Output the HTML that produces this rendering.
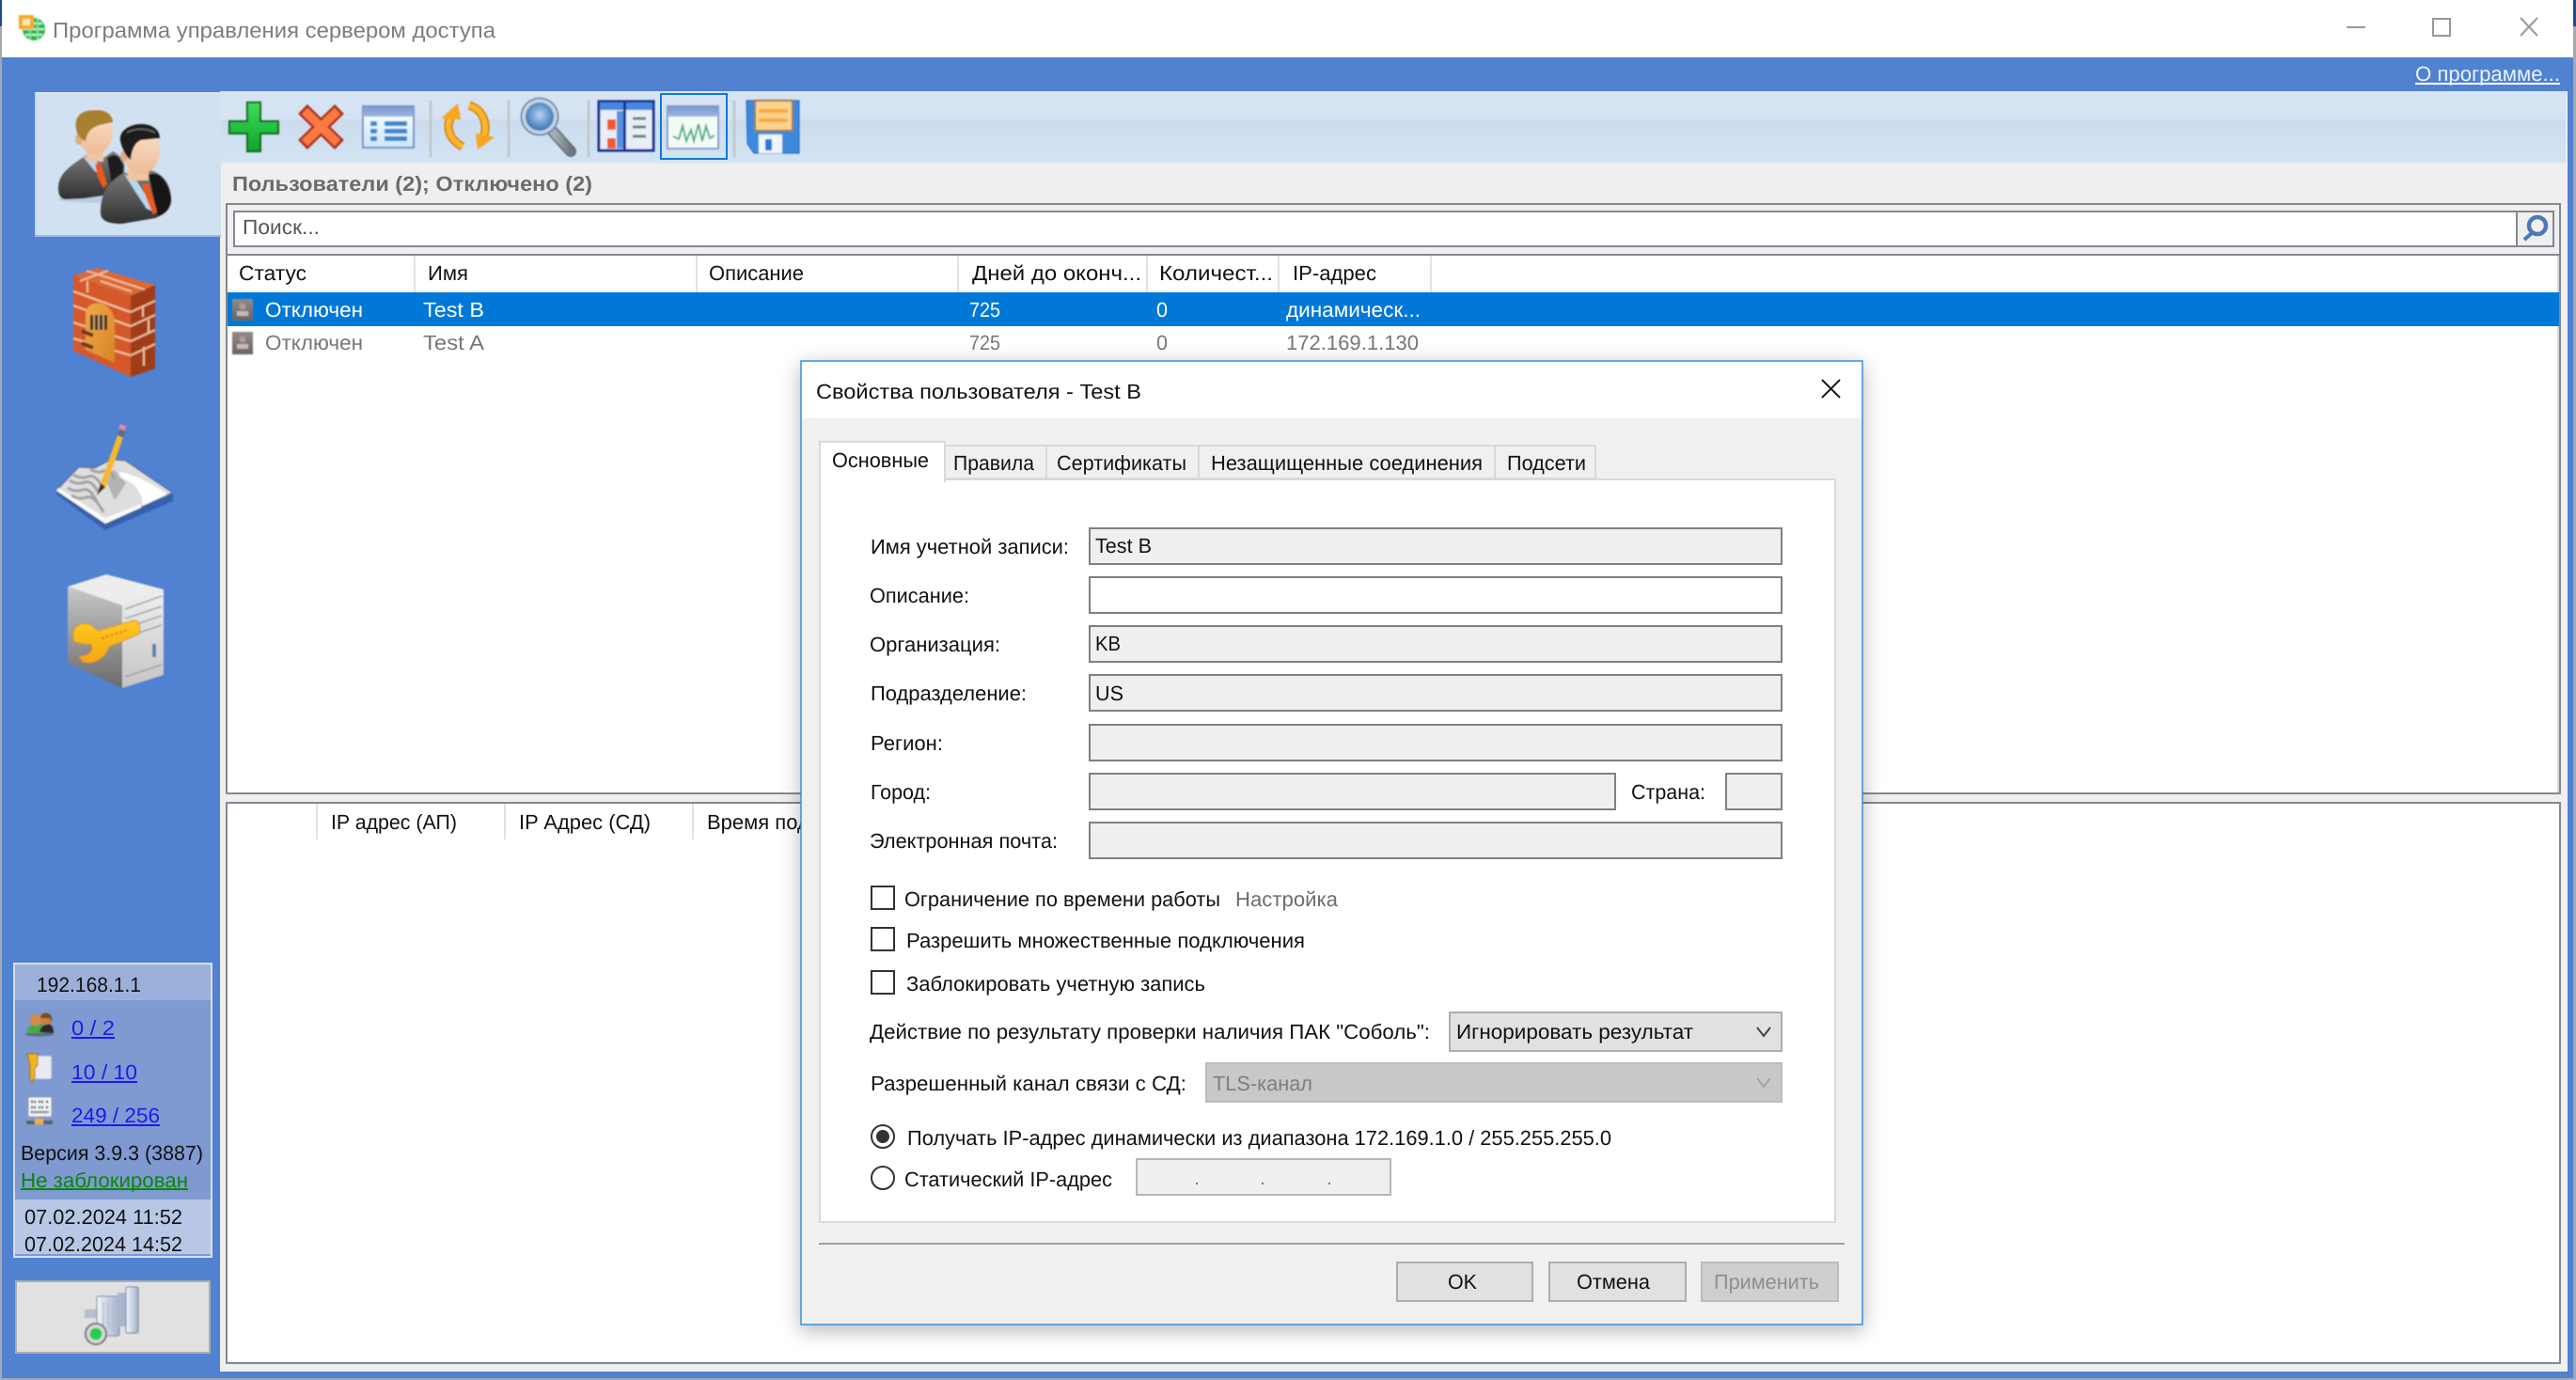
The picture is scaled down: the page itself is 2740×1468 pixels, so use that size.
<!DOCTYPE html>
<html lang="ru"><head><meta charset="utf-8"><title>Программа управления сервером доступа</title>
<style>
html,body{margin:0;padding:0;background:#fff;width:2740px;height:1468px;overflow:hidden}
svg{display:block}
text{font-family:"Liberation Sans","DejaVu Sans",sans-serif;font-size:22px;fill:#111;text-rendering:geometricPrecision;white-space:pre}
.g{fill:#777}
</style></head><body>
<svg xmlns="http://www.w3.org/2000/svg" width="2740" height="1468" viewBox="0 0 2740 1468">
<defs>
<filter id="soft" x="-10%" y="-10%" width="120%" height="120%"><feGaussianBlur stdDeviation="0.7"/></filter>
<filter id="sh" x="-8%" y="-8%" width="116%" height="116%"><feGaussianBlur stdDeviation="11"/></filter>
<linearGradient id="tb1" x1="0" y1="0" x2="0" y2="1"><stop offset="0" stop-color="#d7e3f2"/><stop offset="1" stop-color="#d5e3f3"/></linearGradient>
<linearGradient id="tb2" x1="0" y1="0" x2="0" y2="1"><stop offset="0" stop-color="#ccdcee"/><stop offset="1" stop-color="#d2e3f3"/></linearGradient>
<linearGradient id="suit" x1="0" y1="0" x2="0" y2="1"><stop offset="0" stop-color="#7c7c7c"/><stop offset="1" stop-color="#303030"/></linearGradient>
<linearGradient id="skin" x1="0" y1="0" x2="0" y2="1"><stop offset="0" stop-color="#fbe2cb"/><stop offset="1" stop-color="#eebb96"/></linearGradient>
<linearGradient id="plus" x1="0" y1="0" x2="0" y2="1"><stop offset="0" stop-color="#3fdc5c"/><stop offset="1" stop-color="#0ea32a"/></linearGradient>
<linearGradient id="lst" x1="0" y1="0" x2="0" y2="1"><stop offset="0" stop-color="#fff"/><stop offset="1" stop-color="#c9e6f9"/></linearGradient>
<linearGradient id="hdr" x1="0" y1="0" x2="0" y2="1"><stop offset="0" stop-color="#7c97cc"/><stop offset="1" stop-color="#9ab6e2"/></linearGradient>
<radialGradient id="lens" cx=".5" cy=".45" r=".55"><stop offset="0" stop-color="#b9d2ee"/><stop offset=".6" stop-color="#5f93cc"/><stop offset="1" stop-color="#2f6aa6"/></radialGradient>
<linearGradient id="hand" x1="0" y1="0" x2="1" y2="0"><stop offset="0" stop-color="#a8b0b8"/><stop offset="1" stop-color="#6e7780"/></linearGradient>
<linearGradient id="srvL" x1="0" y1="0" x2="0" y2="1"><stop offset="0" stop-color="#c8c8c8"/><stop offset="1" stop-color="#6a6a6a"/></linearGradient>
<linearGradient id="srvR" x1="0" y1="0" x2="0" y2="1"><stop offset="0" stop-color="#efefef"/><stop offset="1" stop-color="#c4c4c4"/></linearGradient>
<linearGradient id="wr" x1="0" y1="0" x2="0" y2="1"><stop offset="0" stop-color="#ffc91e"/><stop offset="1" stop-color="#f6a612"/></linearGradient>
<linearGradient id="pl" x1="0" y1="0" x2="1" y2="0"><stop offset="0" stop-color="#f2f5fb"/><stop offset="1" stop-color="#a3b0cc"/></linearGradient>
<linearGradient id="door" x1="0" y1="0" x2="1" y2="1"><stop offset="0" stop-color="#eeaa48"/><stop offset="1" stop-color="#d98426"/></linearGradient>
<linearGradient id="st" x1="0" y1="0" x2="0" y2="1"><stop offset="0" stop-color="#94888a"/><stop offset="1" stop-color="#6d6361"/></linearGradient>
</defs>

<!-- window -->
<rect width="2740" height="1468" fill="#5181d1"/>
<rect width="2740" height="61" fill="#fff"/>
<rect x="0" y="0" width="2" height="1468" fill="#a4a8b0"/>
<rect x="0" y="0" width="2" height="28" fill="#1d4a8c"/>
<rect x="2737" y="0" width="3" height="1468" fill="#a4a8b0"/>
<rect x="2737" y="0" width="3" height="28" fill="#1d4a8c"/>
<rect x="0" y="1466" width="2740" height="2" fill="#a4a8b0"/>
<!-- title -->
<g filter="url(#soft)">
<circle cx="36" cy="31" r="12" fill="#26b54a"/>
<path d="M25 31h22M27 25h18M27 37h18" stroke="#c9f3d2" stroke-width="2"/>
<path d="M32 20v22M40 20v22" stroke="#7fe39a" stroke-width="2"/>
<rect x="20" y="16" width="16" height="15" rx="1" fill="#f6aa24"/>
<rect x="24" y="20" width="8" height="7" fill="#fce7b6"/>
</g>
<text x="56" y="40" textLength="471" lengthAdjust="spacingAndGlyphs" style="font-size:23px;fill:#7d7d7d">Программа управления сервером доступа</text>
<!-- window buttons -->
<rect x="2496" y="28" width="20" height="2" fill="#999"/>
<rect x="2588" y="20" width="18" height="18" fill="none" stroke="#999" stroke-width="2"/>
<path d="M2681 19L2699 38M2699 19L2681 38" stroke="#999" stroke-width="2"/>
<!-- about -->
<text x="2569" y="86" textLength="154" lengthAdjust="spacingAndGlyphs" style="fill:#e9f3ff">О программе...</text>
<rect x="2569" y="88" width="154" height="2" fill="#fff"/>

<!-- main panel -->
<rect x="234" y="97" width="2497" height="1362" fill="#efefef"/>
<rect x="235" y="97" width="2494" height="30" fill="url(#tb1)"/>
<rect x="235" y="127" width="2494" height="45" fill="url(#tb2)"/>
<rect x="235" y="172" width="2494" height="2" fill="#dfe7f0"/>
<rect x="2729" y="97" width="2" height="62" fill="#e9eef5"/>

<!-- side selected tab -->
<rect x="37" y="98" width="198" height="152" fill="#d1e1f2"/>
<rect x="37" y="98" width="198" height="2" fill="#dde7f4"/>
<rect x="37" y="250" width="198" height="2" fill="#9fb5db"/>
<rect x="37" y="98" width="2" height="152" fill="#c5d6ec"/>

<!-- users icon -->
<g filter="url(#soft)">
<ellipse cx="122" cy="212" rx="60" ry="4" fill="#a9bcd4" opacity=".6"/>
<path d="M62 200C62 182 80 174 93 164L105 172L120 161C130 166 134 175 132 182L130 202L110 208L90 211L70 212C64 212 62 206 62 200Z" fill="url(#suit)"/>
<path d="M114 168C122 162 128 166 131 176L130 200L120 203Z" fill="#1a1a1a"/>
<path d="M88 166L102 171L112 192L100 181Z" fill="#b8d6ef"/>
<path d="M101 175L107 174L114 196L110 200L104 188Z" fill="#ea5a18"/>
<rect x="92" y="152" width="18" height="20" fill="#eec4a2"/>
<ellipse cx="101" cy="140" rx="19" ry="24" fill="url(#skin)"/>
<ellipse cx="84" cy="148" rx="4" ry="6" fill="#dcae86"/>
<path d="M81 137C78 120 92 117 102 117C115 117 120 124 120 130L106 133C97 136 93 140 91 150C85 148 82 143 81 137Z" fill="#a8802e"/>
<path d="M107 226C107 202 118 192 133 183L146 192L160 181C172 184 182 195 182 212C182 222 175 228 165 232L130 238C115 238 107 235 107 226Z" fill="url(#suit)"/>
<path d="M158 186C168 180 180 192 182 212C182 222 175 228 168 230Z" fill="#141414"/>
<path d="M132 185L146 193L166 226L156 222L144 204Z" fill="#b8d6ef"/>
<path d="M151 196L158 195L167 225L163 228L156 212Z" fill="#ea5a18"/>
<rect x="136" y="172" width="22" height="20" fill="#eec4a2"/>
<ellipse cx="150" cy="160" rx="20" ry="25" fill="url(#skin)"/>
<ellipse cx="132" cy="166" rx="4" ry="6" fill="#dcae86"/>
<path d="M128 150C126 138 140 132 150 132C162 132 170 138 170 147L150 149C143 152 140 160 139 170C133 166 130 158 128 150Z" fill="#1d1d1d"/>
<path d="M135 141C145 136 155 136 165 141" stroke="#606060" stroke-width="2" fill="none"/>
</g>

<!-- firewall -->
<g filter="url(#soft)">
<polygon points="78,293 103,285 165,303 139,315" fill="#dc6836"/>
<polygon points="78,293 139,315 139,401 78,373" fill="#d4592a"/>
<polygon points="139,315 165,303 165,392 139,401" fill="#a03c18"/>
<path d="M92 288L154 308M85 299L115 288M107 299L140 310" stroke="#efba96" stroke-width="2" fill="none"/>
<path d="M78 310L139 332M78 325L139 347M78 343L139 363M78 360L139 378" stroke="#efc09c" stroke-width="2.2" fill="none"/>
<path d="M139 332L165 320M139 347L165 335M139 363L165 351M139 378L165 366" stroke="#e8b694" stroke-width="2.2" fill="none"/>
<path d="M93 299v12M152 325v12M158 340v14M153 369v20" stroke="#efc09c" stroke-width="2"/>
<path d="M91 372V335C91 325 100 321 108 323C118 326 122 335 122 345V386Z" fill="url(#door)"/>
<rect x="96" y="335" width="18" height="16" fill="#3c2a22"/>
<path d="M100 335v16M105 335v16M110 335v16" stroke="#c9a26c" stroke-width="2"/>
<path d="M87 352L99 357M87 365L99 370" stroke="#6b3a14" stroke-width="4"/>
</g>

<!-- book -->
<g filter="url(#soft)">
<path d="M60 526L112 564L184 533L184 525L112 556L60 520Z" fill="#3561ad"/>
<path d="M60 522L84 497L101 498L118 489L133 490L183 524L112 557Z" fill="#dedede" stroke="#5d6c8a" stroke-width="1"/>
<path d="M60 522L112 557L150 540L150 536L112 551L62 519Z" fill="#fafafa"/>
<path d="M128 502C148 506 170 520 178 526L152 538C152 524 142 510 125 508Z" fill="#fff"/>
<path d="M110 505L122 500L134 514L122 532Z" fill="#8f8f8f" opacity=".55"/>
<path d="M74 511Q82 516 90 513T105 525M78 505Q86 510 94 507T110 520M72 519Q80 524 88 521T104 536M76 527Q84 532 92 529T110 545M96 499Q104 504 110 501T122 510" stroke="#a3a3a3" stroke-width="3" fill="none"/>
<path d="M103 525L107 514L125 463L131 465L112 520Z" fill="#f5b92e"/>
<path d="M103 527L107 514L112 518Z" fill="#333"/>
<path d="M125 463L128 454L134 456L131 466Z" fill="#5b7088"/>
<rect x="127" y="452" width="7" height="5" fill="#e98aa0" transform="rotate(18 130 454)"/>
</g>

<!-- server -->
<g filter="url(#soft)">
<polygon points="72,624 113,611 174,627 130,644" fill="#ededed"/>
<polygon points="72,624 130,644 130,732 72,705" fill="url(#srvL)"/>
<polygon points="130,644 174,627 174,718 130,732" fill="url(#srvR)"/>
<path d="M133 648L172 634M133 658L172 645M133 668L172 655M133 678L172 665M133 720L172 707" stroke="#a3a3a3" stroke-width="1.5"/>
<rect x="162" y="685" width="4" height="14" fill="#5b7fb8"/>
<path d="M78 672C80 664 90 661 97 665L104 671L142 660C149 659 150 670 147 675L116 688C112 700 100 708 88 704L84 698C95 698 100 692 97 686C92 684 85 686 78 682Z" fill="url(#wr)" stroke="#d98b12" stroke-width="1"/>
<path d="M108 679L136 670" stroke="#d08a16" stroke-width="2" stroke-dasharray="3 2"/>
</g>

<!-- toolbar icons -->
<g filter="url(#soft)">
<path d="M263 109H277V129H296V142H277V161H263V142H244V129H263Z" fill="url(#plus)" stroke="#0b6a1f" stroke-width="2"/>
<path d="M322 116L361 154M361 116L322 154" stroke="#b0301a" stroke-width="14"/>
<path d="M324 118L359 152M359 118L324 152" stroke="#fa7a42" stroke-width="9"/>
<rect x="386" y="113" width="54" height="44" fill="url(#lst)" stroke="#5b74b4" stroke-width="1.5"/>
<rect x="386" y="113" width="54" height="11" fill="url(#hdr)"/>
<path d="M394 129h7v5h-7zM409 129h24v5h-24zM394 137h7v5h-7zM409 137h24v5h-24zM394 145h7v5h-7zM409 145h24v5h-24z" fill="#3f86d0"/>
<path d="M487 117C473 126 473 146 492 156" stroke="#c87a08" stroke-width="9" fill="none"/>
<path d="M487 117C473 126 473 146 492 156" stroke="#ffb42a" stroke-width="6" fill="none"/>
<path d="M469 126L487 110L490 127Z" fill="#f8a61e"/>
<path d="M499 112C518 118 520 140 511 152" stroke="#c87a08" stroke-width="9" fill="none"/>
<path d="M499 112C518 118 520 140 511 152" stroke="#ffb42a" stroke-width="6" fill="none"/>
<path d="M526 146L508 159L506 142Z" fill="#f8a61e"/>
<path d="M589 141L607 161" stroke="#5e6b78" stroke-width="12" stroke-linecap="round"/>
<path d="M589 141L607 161" stroke="url(#hand)" stroke-width="9" stroke-linecap="round"/>
<circle cx="574" cy="124" r="17" fill="url(#lens)" stroke="#c5d3e2" stroke-width="4"/>
<circle cx="574" cy="124" r="19.5" fill="none" stroke="#5a7ba0" stroke-width="1.5"/>
<rect x="637" y="108" width="58" height="52" fill="#e8eef7" stroke="#12308f" stroke-width="3"/>
<rect x="638" y="109" width="56" height="8" fill="#4a86e0"/>
<rect x="663" y="109" width="3" height="50" fill="#12308f"/>
<rect x="656" y="118" width="7" height="40" fill="#5a8fe0"/>
<rect x="646" y="127" width="9" height="11" fill="#f05a2a"/>
<rect x="646" y="147" width="9" height="11" fill="#f05a2a"/>
<path d="M673 126h14M673 135h14M673 145h14" stroke="#777" stroke-width="3"/>
<path d="M794 107H850V163H802L795 153Z" fill="#3a8adb" stroke="#2a5fc0" stroke-width="1"/>
<rect x="803" y="107" width="40" height="32" fill="#fbd38f" stroke="#9c7a4a" stroke-width="2"/>
<path d="M807 118h31M807 128h31" stroke="#f9a93a" stroke-width="4"/>
<rect x="807" y="143" width="25" height="20" fill="#eef5fc"/>
<rect x="814" y="148" width="7" height="12" fill="#2a79d0"/>
</g>
<path d="M458 107V167M541 107V167M626 107V167M781 107V167" stroke="#c4c9d0" stroke-width="3"/>
<rect x="703" y="100" width="70" height="69" fill="none" stroke="#0f78d8" stroke-width="2"/>
<g filter="url(#soft)">
<rect x="710" y="113" width="54" height="45" fill="#f2fbf5" stroke="#6b82bb" stroke-width="1.5"/>
<rect x="710" y="113" width="54" height="11" fill="url(#hdr)"/>
<path d="M716 145L722 148L726 134L730 150L735 138L738 150L743 132L747 150L751 134L755 147L760 144" stroke="#4fae86" stroke-width="2" fill="none"/>
</g>

<!-- caption -->
<text x="247" y="203" textLength="383" lengthAdjust="spacingAndGlyphs" style="font-weight:bold;fill:#6b6b6b">Пользователи (2); Отключено (2)</text>

<!-- top group -->
<rect x="241" y="217" width="2482" height="627" fill="#efefef" stroke="#858891" stroke-width="2"/>
<rect x="249" y="225" width="2467" height="37" fill="#fff" stroke="#858891" stroke-width="2"/>
<rect x="2677" y="225" width="39" height="37" fill="#efefef" stroke="#858891" stroke-width="2"/>
<circle cx="2699" cy="240" r="9" fill="none" stroke="#4a7ab5" stroke-width="4.5"/>
<path d="M2693 248L2685 255" stroke="#4a7ab5" stroke-width="4"/>
<text x="258" y="249" textLength="82" lengthAdjust="spacingAndGlyphs" style="fill:#555">Поиск...</text>
<rect x="242" y="270" width="2480" height="573" fill="#fff"/>
<rect x="241" y="270" width="2482" height="2" fill="#858891"/>
<rect x="2720" y="272" width="2" height="571" fill="#d8d8d8"/>
<!-- headers -->
<path d="M441 272V311M741 272V311M1019 272V311M1220 272V311M1360 272V311M1522 272V311" stroke="#e2e2e2" stroke-width="2"/>
<text x="254" y="298" textLength="72" lengthAdjust="spacingAndGlyphs">Статус</text>
<text x="455" y="298" textLength="43" lengthAdjust="spacingAndGlyphs">Имя</text>
<text x="754" y="298" textLength="101" lengthAdjust="spacingAndGlyphs">Описание</text>
<text x="1034" y="298" textLength="180" lengthAdjust="spacingAndGlyphs">Дней до оконч...</text>
<text x="1233" y="298" textLength="121" lengthAdjust="spacingAndGlyphs">Количест...</text>
<text x="1375" y="298" textLength="89" lengthAdjust="spacingAndGlyphs">IP-адрес</text>
<!-- rows -->
<rect x="242" y="311" width="2480" height="36" fill="#0078d7"/>
<g filter="url(#soft)">
<rect x="247" y="318" width="22" height="23" fill="url(#st)"/>
<circle cx="258" cy="326" r="3.5" fill="#a89c9a"/><rect x="252" y="331" width="12" height="5" fill="#c6bcb8"/>
<rect x="247" y="353" width="22" height="24" fill="url(#st)"/>
<circle cx="258" cy="361" r="3.5" fill="#a89c9a"/><rect x="252" y="366" width="12" height="5" fill="#c6bcb8"/>
</g>
<text x="282" y="337" textLength="104" lengthAdjust="spacingAndGlyphs" style="fill:#fff">Отключен</text>
<text x="450" y="337" textLength="65" lengthAdjust="spacingAndGlyphs" style="fill:#fff">Test B</text>
<text x="1031" y="337" textLength="33" lengthAdjust="spacingAndGlyphs" style="fill:#fff">725</text>
<text x="1230" y="337" textLength="12" lengthAdjust="spacingAndGlyphs" style="fill:#fff">0</text>
<text x="1368" y="337" textLength="143" lengthAdjust="spacingAndGlyphs" style="fill:#fff">динамическ...</text>
<text class="g" x="282" y="372" textLength="104" lengthAdjust="spacingAndGlyphs">Отключен</text>
<text class="g" x="450" y="372" textLength="65" lengthAdjust="spacingAndGlyphs">Test A</text>
<text class="g" x="1031" y="372" textLength="33" lengthAdjust="spacingAndGlyphs">725</text>
<text class="g" x="1230" y="372" textLength="12" lengthAdjust="spacingAndGlyphs">0</text>
<text class="g" x="1368" y="372" textLength="141" lengthAdjust="spacingAndGlyphs">172.169.1.130</text>

<!-- bottom group -->
<rect x="241" y="854" width="2482" height="596" fill="#fff" stroke="#858891" stroke-width="2"/>
<path d="M337 855V893M537 855V893M737 855V893" stroke="#e2e2e2" stroke-width="2"/>
<text x="352" y="882" textLength="134" lengthAdjust="spacingAndGlyphs">IP адрес (АП)</text>
<text x="552" y="882" textLength="140" lengthAdjust="spacingAndGlyphs">IP Адрес (СД)</text>
<text x="752" y="882">Время подключения</text>

<!-- info box -->
<rect x="15" y="1025" width="210" height="312" fill="#7f9ad1" stroke="#d9deea" stroke-width="2"/>
<rect x="16" y="1026" width="208" height="38" fill="#9db0dc"/>
<rect x="16" y="1276" width="208" height="58" fill="#b9c7e6"/>
<text x="39" y="1055" textLength="111" lengthAdjust="spacingAndGlyphs">192.168.1.1</text>
<g filter="url(#soft)">
<ellipse cx="42" cy="1100" rx="15" ry="2.5" fill="#5a6a86"/>
<path d="M28 1099C28 1092 34 1090 37 1089H44C48 1091 49 1094 49 1099Z" fill="#4aa84a"/>
<circle cx="38" cy="1085" r="6" fill="#d98a3a"/>
<path d="M42 1098C43 1092 47 1090 50 1089H52C56 1091 57 1094 57 1099Z" fill="#2c2c2c"/>
<circle cx="49" cy="1084" r="6" fill="#c9803a"/>
<path d="M43 1083C43 1078 48 1077 51 1078C55 1079 56 1084 55 1087L53 1083Z" fill="#7a4a1a"/>
<rect x="33" y="1123" width="22" height="25" rx="2" fill="#e8ebf2" stroke="#99a3bd" stroke-width="1"/>
<path d="M29 1121H40V1133L37 1137V1146L34 1151L32 1148V1133Z" fill="#f4b41c" stroke="#a86a0c" stroke-width="1"/>
<rect x="30" y="1167" width="25" height="21" fill="#f1f3f6" stroke="#8b93a3" stroke-width="1"/>
<path d="M33 1172h6M41 1172h6M49 1172h3M33 1178h6M41 1178h6M49 1178h3M33 1183h19" stroke="#333" stroke-width="2.5" stroke-dasharray="2 1"/>
<rect x="28" y="1192" width="28" height="4" fill="#5a6271"/>
<rect x="37" y="1190" width="9" height="6" fill="#f4ad3e"/>
</g>
<text x="76" y="1101" textLength="46" lengthAdjust="spacingAndGlyphs" style="fill:#1a1aee">0 / 2</text>
<rect x="76" y="1103" width="46" height="2" fill="#1a1aee"/>
<text x="76" y="1148" textLength="70" lengthAdjust="spacingAndGlyphs" style="fill:#1a1aee">10 / 10</text>
<rect x="76" y="1150" width="70" height="2" fill="#1a1aee"/>
<text x="76" y="1194" textLength="94" lengthAdjust="spacingAndGlyphs" style="fill:#1a1aee">249 / 256</text>
<rect x="76" y="1196" width="94" height="2" fill="#1a1aee"/>
<text x="22" y="1234" textLength="194" lengthAdjust="spacingAndGlyphs">Версия 3.9.3 (3887)</text>
<text x="22" y="1263" textLength="178" lengthAdjust="spacingAndGlyphs" style="fill:#0a870a">Не заблокирован</text>
<rect x="22" y="1264" width="178" height="2" fill="#0a870a"/>
<text x="26" y="1302" textLength="168" lengthAdjust="spacingAndGlyphs">07.02.2024 11:52</text>
<text x="26" y="1331" textLength="168" lengthAdjust="spacingAndGlyphs">07.02.2024 14:52</text>

<!-- connection button -->
<rect x="17" y="1363" width="206" height="76" fill="#e1e1e1" stroke="#adadad" stroke-width="2"/>
<g filter="url(#soft)">
<rect x="90" y="1393" width="14" height="9" fill="#b6bdcc"/>
<rect x="103" y="1379" width="24" height="42" rx="2" fill="url(#pl)" stroke="#7f89a3" stroke-width="1"/>
<rect x="125" y="1375" width="9" height="36" fill="#aab5cc"/>
<rect x="134" y="1369" width="13" height="49" rx="2" fill="url(#pl)" stroke="#6c7896" stroke-width="1"/>
<path d="M110 1385v28M115 1385v28M120 1385v28" stroke="#b6bdcc" stroke-width="1.5"/>
<circle cx="102" cy="1419" r="11" fill="#d8d8d8" stroke="#777" stroke-width="2"/>
<circle cx="102" cy="1419" r="6.5" fill="#21d04a"/>
</g>

<!-- dialog -->
<rect x="851" y="388" width="1131" height="1028" fill="#000" opacity=".28" filter="url(#sh)"/>
<rect x="852" y="384" width="1129" height="1025" fill="#f0f0f0" stroke="#3a8fdc" stroke-width="1.5"/>
<rect x="853" y="385" width="1127" height="60" fill="#fff"/>
<text x="868" y="424" textLength="346" lengthAdjust="spacingAndGlyphs">Свойства пользователя - Test B</text>
<path d="M1938 404L1957 423M1957 404L1938 423" stroke="#1a1a1a" stroke-width="2"/>
<!-- tabs -->
<rect x="872" y="510" width="1080" height="790" fill="#fff" stroke="#d9d9d9" stroke-width="2"/>
<rect x="1005" y="474" width="692" height="35" fill="#f0f0f0" stroke="#d9d9d9" stroke-width="2"/>
<path d="M1113 474V509M1275 474V509M1590 474V509" stroke="#d9d9d9" stroke-width="2"/>
<rect x="872" y="470" width="133" height="42" fill="#fff" stroke="#d9d9d9" stroke-width="2"/>
<rect x="873" y="505" width="131" height="8" fill="#fff"/>
<text x="885" y="497" textLength="103" lengthAdjust="spacingAndGlyphs">Основные</text>
<text x="1014" y="500" textLength="86" lengthAdjust="spacingAndGlyphs">Правила</text>
<text x="1124" y="500" textLength="138" lengthAdjust="spacingAndGlyphs">Сертификаты</text>
<text x="1288" y="500" textLength="289" lengthAdjust="spacingAndGlyphs">Незащищенные соединения</text>
<text x="1603" y="500" textLength="84" lengthAdjust="spacingAndGlyphs">Подсети</text>
<!-- fields -->
<g stroke="#808080" stroke-width="2" fill="#efefef">
<rect x="1159" y="562" width="736" height="38"/>
<rect x="1159" y="614" width="736" height="38" fill="#fff"/>
<rect x="1159" y="666" width="736" height="38"/>
<rect x="1159" y="718" width="736" height="38"/>
<rect x="1159" y="771" width="736" height="38"/>
<rect x="1159" y="823" width="559" height="38"/>
<rect x="1836" y="823" width="59" height="38"/>
<rect x="1159" y="875" width="736" height="38"/>
</g>
<text x="926" y="589" textLength="211" lengthAdjust="spacingAndGlyphs">Имя учетной записи:</text>
<text x="925" y="641" textLength="106" lengthAdjust="spacingAndGlyphs">Описание:</text>
<text x="925" y="693" textLength="139" lengthAdjust="spacingAndGlyphs">Организация:</text>
<text x="926" y="745" textLength="166" lengthAdjust="spacingAndGlyphs">Подразделение:</text>
<text x="926" y="798" textLength="77" lengthAdjust="spacingAndGlyphs">Регион:</text>
<text x="926" y="850" textLength="64" lengthAdjust="spacingAndGlyphs">Город:</text>
<text x="1735" y="850" textLength="79" lengthAdjust="spacingAndGlyphs">Страна:</text>
<text x="925" y="902" textLength="200" lengthAdjust="spacingAndGlyphs">Электронная почта:</text>
<text x="1165" y="588" textLength="60" lengthAdjust="spacingAndGlyphs">Test B</text>
<text x="1165" y="692" textLength="27" lengthAdjust="spacingAndGlyphs">KB</text>
<text x="1165" y="745" textLength="30" lengthAdjust="spacingAndGlyphs">US</text>
<!-- checkboxes -->
<g fill="#fff" stroke="#333" stroke-width="2">
<rect x="927" y="943" width="24" height="24"/>
<rect x="927" y="987" width="24" height="24"/>
<rect x="927" y="1033" width="24" height="24"/>
</g>
<text x="962" y="964" textLength="336" lengthAdjust="spacingAndGlyphs">Ограничение по времени работы</text>
<text x="1314" y="964" textLength="109" lengthAdjust="spacingAndGlyphs" style="fill:#6d6d6d">Настройка</text>
<text x="964" y="1008" textLength="424" lengthAdjust="spacingAndGlyphs">Разрешить множественные подключения</text>
<text x="964" y="1054" textLength="318" lengthAdjust="spacingAndGlyphs">Заблокировать учетную запись</text>
<!-- combos -->
<text x="925" y="1105" textLength="596" lengthAdjust="spacingAndGlyphs">Действие по результату проверки наличия ПАК "Соболь":</text>
<rect x="1542" y="1077" width="353" height="41" fill="#e1e1e1" stroke="#adadad" stroke-width="2"/>
<text x="1549" y="1105" textLength="252" lengthAdjust="spacingAndGlyphs">Игнорировать результат</text>
<path d="M1869 1093L1876 1102L1883 1093" fill="none" stroke="#444" stroke-width="2"/>
<text x="926" y="1160" textLength="336" lengthAdjust="spacingAndGlyphs">Разрешенный канал связи с СД:</text>
<rect x="1283" y="1131" width="612" height="41" fill="#c8c8c8" stroke="#bcbcbc" stroke-width="2"/>
<text x="1290" y="1160" textLength="106" lengthAdjust="spacingAndGlyphs" style="fill:#7f7f7f">TLS-канал</text>
<path d="M1869 1147L1876 1156L1883 1147" fill="none" stroke="#a4a4a4" stroke-width="2"/>
<!-- radios -->
<circle cx="939" cy="1209" r="12" fill="#fff" stroke="#333" stroke-width="2"/>
<circle cx="939" cy="1209" r="7" fill="#333"/>
<text x="965" y="1218" textLength="749" lengthAdjust="spacingAndGlyphs">Получать IP-адрес динамически из диапазона 172.169.1.0 / 255.255.255.0</text>
<circle cx="939" cy="1253" r="12" fill="#fff" stroke="#333" stroke-width="2"/>
<text x="962" y="1262" textLength="221" lengthAdjust="spacingAndGlyphs">Статический IP-адрес</text>
<rect x="1209" y="1233" width="270" height="38" fill="#efefef" stroke="#b5b5b5" stroke-width="2"/>
<path d="M1272 1259h2M1342 1259h2M1413 1259h2" stroke="#777" stroke-width="2"/>
<!-- separator & buttons -->
<rect x="871" y="1322" width="1091" height="2" fill="#a0a0a0"/>
<g fill="#e1e1e1" stroke="#adadad" stroke-width="2">
<rect x="1486" y="1343" width="144" height="41"/>
<rect x="1648" y="1343" width="145" height="41"/>
<rect x="1810" y="1343" width="145" height="41" fill="#cfcfcf" stroke="#bcbcbc"/>
</g>
<text x="1540" y="1371" textLength="31" lengthAdjust="spacingAndGlyphs">OK</text>
<text x="1677" y="1371" textLength="78" lengthAdjust="spacingAndGlyphs">Отмена</text>
<text x="1823" y="1371" textLength="112" lengthAdjust="spacingAndGlyphs" style="fill:#8f8f8f">Применить</text>
</svg>
</body></html>
